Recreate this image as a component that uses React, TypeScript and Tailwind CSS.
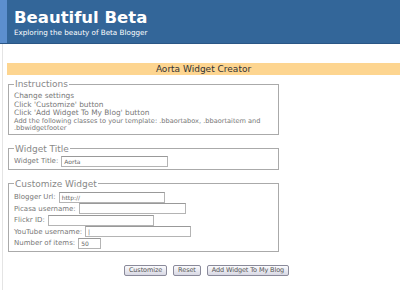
import React from 'react';

const font = { fontFamily: '"DejaVu Sans", Verdana, sans-serif' };

function Field({ label, value = '', width }: { label: string; value?: string; width: string }) {
  return (
    <div className="flex items-center h-[11px]">
      <span className="text-[7px] text-[#777] mr-[3px] whitespace-nowrap">{label}</span>
      <div className={`h-[11px] border border-[#b4b4b4] border-t-[#999] bg-white text-[6px] leading-[9px] text-[#666] px-[2px] ${width}`}>{value}</div>
    </div>
  );
}

export default function App() {
  return (
    <div className="w-[400px] h-[290px] bg-white overflow-hidden" style={font}>
      <div className="flex h-[44px] bg-[#336699] border-b border-[#2a5685]">
        <div className="w-[7px] bg-[#5c8fce]" />
        <div className="pl-[7px] pt-[9px]">
          <div className="text-white font-bold text-[16.5px] leading-[18px]">Beautiful Beta</div>
          <div className="text-white text-[7.2px] leading-[10px] mt-[1px]">Exploring the beauty of Beta Blogger</div>
        </div>
      </div>
      <div className="flex h-[246px]">
        <div className="w-[3px] border-r border-[#e4e4e4]" />
        <div className="flex-1 pl-[4px] pt-[19px]">
          <div className="h-[12px] bg-[#fdd590] text-[9px] leading-[12px] text-[#333] text-center">Aorta Widget Creator</div>
          <fieldset className="ml-[1px] mt-[4px] w-[271px] border border-[#aaa] px-[5px] pb-[2px] text-[#777]">
            <legend className="text-[9px] leading-[10px] text-[#888] px-[1px]">Instructions</legend>
            <div className="pt-[3px]">
              <div className="text-[7.4px] leading-[8.6px]">Change settings</div>
              <div className="text-[7.4px] leading-[8.6px]">Click 'Customize' button</div>
              <div className="text-[7.4px] leading-[8.6px]">Click 'Add Widget To My Blog' button</div>
              <div className="text-[6.6px] leading-[7px]">Add the following classes to your template: .bbaortabox, .bbaortaitem and .bbwidgetfooter</div>
            </div>
          </fieldset>
          <fieldset className="ml-[1px] mt-[9px] w-[271px] border border-[#aaa] px-[5px] pb-[2px]">
            <legend className="text-[9px] leading-[10px] text-[#888] px-[1px]">Widget Title</legend>
            <div className="pt-[2px]">
              <Field label="Widget Title:" value="Aorta" width="w-[107px]" />
            </div>
          </fieldset>
          <fieldset className="ml-[1px] mt-[9px] w-[271px] border border-[#aaa] px-[5px] pb-[2px]">
            <legend className="text-[9px] leading-[10px] text-[#888] px-[1px]">Customize Widget</legend>
            <div className="pt-[3px] flex flex-col gap-[0.5px]">
              <Field label="Blogger Url:" value="http://" width="w-[106px]" />
              <Field label="Picasa username:" width="w-[107px]" />
              <Field label="Flickr ID:" width="w-[106px]" />
              <Field label="YouTube username:" value="|" width="w-[106px]" />
              <Field label="Number of items:" value="50" width="w-[23px]" />
            </div>
          </fieldset>
          <div className="flex justify-center gap-[6px] mt-[13px] pl-[6px]">
            {['Customize', 'Reset', 'Add Widget To My Blog'].map(b => (
              <div key={b} className="h-[11px] px-[4px] border border-[#8a8a9a] rounded-[2px] bg-gradient-to-b from-[#fbfbfd] to-[#d8d8e4] text-[6.5px] leading-[9px] text-[#555] tracking-[-0.1px]">{b}</div>
            ))}
          </div>
        </div>
      </div>
    </div>
  );
}
